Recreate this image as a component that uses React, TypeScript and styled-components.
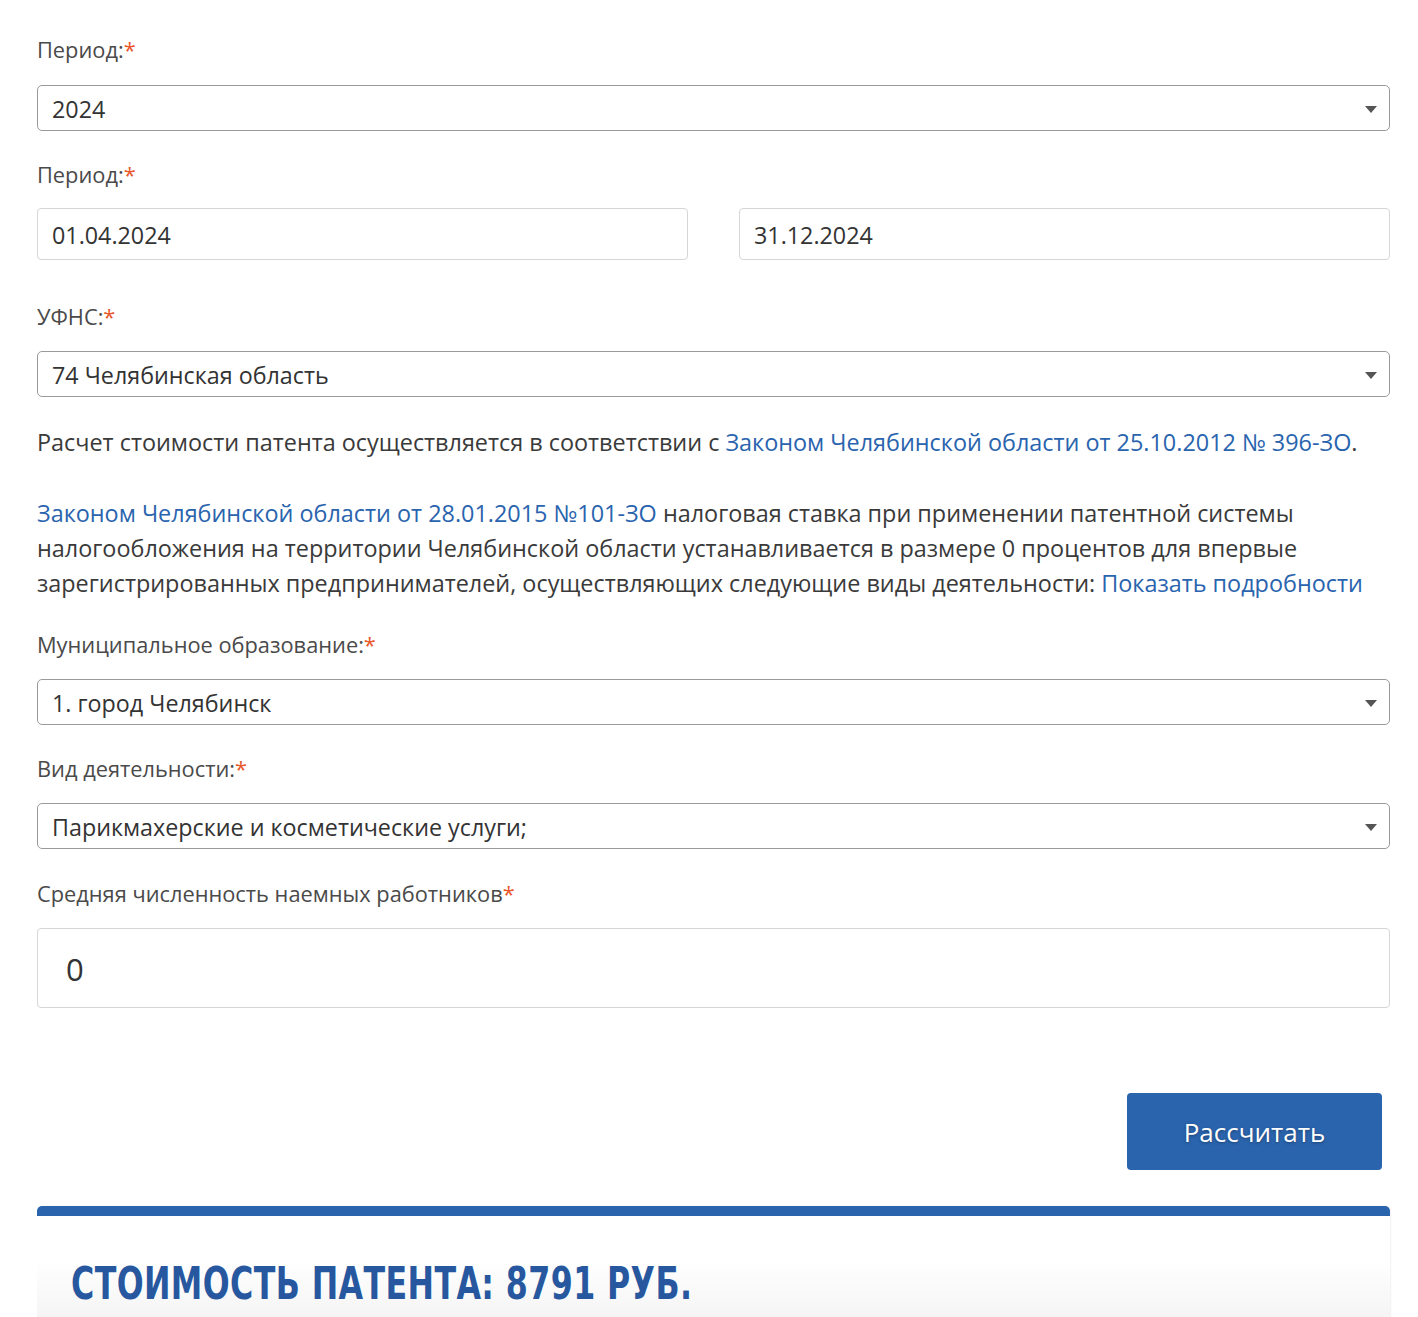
import React from "react";
import styled, { createGlobalStyle } from "styled-components";

const Global = createGlobalStyle`
  body { margin: 0; background: #fff; font-family: "Open Sans", "Noto Sans", sans-serif; color: #333; }
`;

const Page = styled.div`
  padding: 0 28px 0 37px;
  display: flex;
  flex-direction: column;
`;

const Label = styled.div<{ $top: number }>`
  margin-top: ${p => p.$top}px;
  height: 30px;
  line-height: 30px;
  font-size: 21.8px;
  color: #4a4a4a;
  span { color: #e8562a; }
`;

const Select = styled.div<{ $top?: number }>`
  margin-top: ${p => p.$top ?? 20}px;
  height: 46px;
  box-sizing: border-box;
  border: 1.5px solid #9a9a9a;
  border-radius: 5px;
  display: flex;
  align-items: center;
  justify-content: space-between;
  padding: 2px 12px 0 14px;
  font-size: 23.3px;
  color: #333;
`;

const Caret = styled.span`
  width: 0; height: 0;
  border-left: 6px solid transparent;
  border-right: 6px solid transparent;
  border-top: 7px solid #555;
`;

const Row = styled.div`
  margin-top: 18px;
  display: grid;
  grid-template-columns: 1fr 1fr;
  gap: 51px;
`;

const Input = styled.div<{ $h?: number; $size?: number; $pad?: number; $top?: number }>`
  margin-top: ${p => p.$top ?? 0}px;
  height: ${p => p.$h ?? 52}px;
  box-sizing: border-box;
  border: 1.5px solid #d6d6d6;
  border-radius: 4px;
  display: flex;
  align-items: center;
  padding: 2px 0 0 ${p => p.$pad ?? 14}px;
  font-size: ${p => p.$size ?? 23.3}px;
  color: #333;
`;

const Para = styled.p<{ $top: number }>`
  margin: ${p => p.$top}px 0 0;
  font-size: 23.4px;
  line-height: 35px;
  color: #3a3a3a;
  a { color: #2a64ae; text-decoration: none; }
`;

const Actions = styled.div`
  margin-top: 85px;
  display: flex;
  justify-content: flex-end;
  padding-right: 8px;
`;

const Button = styled.button`
  width: 255px;
  height: 77px;
  background: #2a64ad;
  border: none;
  border-radius: 4px;
  color: #fff;
  font-family: "Open Sans", sans-serif;
  font-size: 26px;
  text-shadow: 0 1px 3px rgba(0,0,0,0.35);
`;

const Result = styled.div`
  margin-top: 36px;
  border-top: 10px solid #2a64ad;
  border-radius: 5px 5px 0 0;
  height: 120px;
  background: linear-gradient(180deg, #fff 40%, #f3f3f3 100%);
  box-shadow: 1px 0 2px rgba(0,0,0,0.06);
  padding: 42px 0 0 34px;
  box-sizing: border-box;
`;

const Title = styled.div`
  font-family: "DejaVu Sans Condensed", "DejaVu Sans", sans-serif;
  font-stretch: condensed;
  font-weight: bold;
  font-size: 44px;
  color: #27589f;
  transform: scaleX(0.8);
  transform-origin: left;
  white-space: nowrap;
  letter-spacing: 0.5px;
`;

export default function App() {
  return (
    <>
      <Global />
      <Page>
        <Label $top={35}>Период:<span>*</span></Label>
        <Select><span>2024</span><Caret /></Select>
        <Label $top={29}>Период:<span>*</span></Label>
        <Row>
          <Input>01.04.2024</Input>
          <Input>31.12.2024</Input>
        </Row>
        <Label $top={42}>УФНС:<span>*</span></Label>
        <Select $top={19}><span>74 Челябинская область</span><Caret /></Select>
        <Para $top={28}>
          Расчет стоимости патента осуществляется в соответствии с <a href="#">Законом Челябинской области от 25.10.2012 № 396-ЗО</a>.
        </Para>
        <Para $top={36}>
          <a href="#">Законом Челябинской области от 28.01.2015 №101-ЗО</a> налоговая ставка при применении патентной системы налогообложения на территории Челябинской области устанавливается в размере 0 процентов для впервые зарегистрированных предпринимателей, осуществляющих следующие виды деятельности: <a href="#">Показать подробности</a>
        </Para>
        <Label $top={29}>Муниципальное образование:<span>*</span></Label>
        <Select $top={19}><span>1. город Челябинск</span><Caret /></Select>
        <Label $top={29}>Вид деятельности:<span>*</span></Label>
        <Select $top={19}><span>Парикмахерские и косметические услуги;</span><Caret /></Select>
        <Label $top={30}>Средняя численность наемных работников<span>*</span></Label>
        <Input $top={19} $h={80} $size={31} $pad={28}>0</Input>
        <Actions><Button>Рассчитать</Button></Actions>
        <Result><Title>СТОИМОСТЬ ПАТЕНТА: 8791 РУБ.</Title></Result>
      </Page>
    </>
  );
}
